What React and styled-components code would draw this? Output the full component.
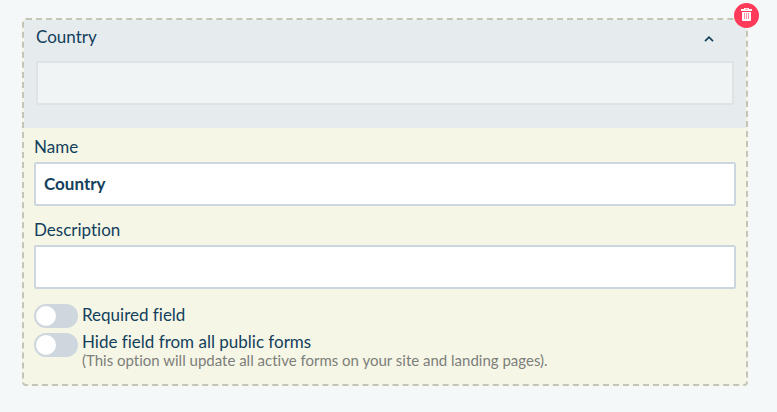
import React, { useState } from "react";
import styled, { createGlobalStyle } from "styled-components";

const GlobalStyle = createGlobalStyle`
  * {
    box-sizing: border-box;
  }
  body {
    margin: 0;
    background: #f5f8f9;
    color: #12405c;
    font-family: Lato, "Liberation Sans", sans-serif;
    font-size: 17px;
    font-variant-ligatures: none;
    line-height: 24px;
  }
`;

// layout
const Page = styled.main`
  padding: 18px 29px 26px 22px;
`;
const Card = styled.section`
  position: relative;
  background: #f6f6e6;
  border: 2px dashed #c4c5b8;
  border-radius: 4px;
`;
const Preview = styled.div`
  padding: 5px 12px 23px;
  background: #e6ebee;
`;
const PreviewHeader = styled.div`
  display: flex;
  justify-content: space-between;
  align-items: center;
  padding-right: 20px;
  margin-bottom: 12px;
`;
const Settings = styled.div`
  padding: 0 10px 15px;
`;

// fields
const Field = styled.div`
  margin-bottom: 5px;
`;
const Label = styled.label`
  display: block;
  padding: 7px 0 3px;
`;
const TextInput = styled.input`
  display: block;
  width: 100%;
  height: 44px;
  padding: 0 8px 2px;
  color: inherit;
  font: inherit;
  font-weight: 700;
  background: #fff;
  border: 2px solid #ccd6de;
  border-radius: 2px;
  &:disabled {
    background: #f0f4f5;
    border-color: #dee3e6;
  }
`;

// buttons
const CollapseButton = styled.button`
  display: flex;
  padding: 4px 0 0;
  color: inherit;
  background: none;
  border: 0;
  cursor: pointer;
`;
const DeleteButton = styled.button`
  position: absolute;
  top: -17px;
  right: -13px;
  display: flex;
  justify-content: center;
  align-items: center;
  width: 25px;
  height: 25px;
  padding: 0 0 2px;
  color: #fff;
  background: #ff3b59;
  border: 0;
  border-radius: 50%;
  cursor: pointer;
`;

// switches
const SwitchList = styled.div`
  display: flex;
  flex-direction: column;
  gap: 5px;
  padding-top: 10px;
`;
const SwitchRow = styled.label`
  display: flex;
  align-items: flex-start;
  gap: 4px;
  cursor: pointer;
`;
const Switch = styled.input`
  appearance: none;
  flex: none;
  width: 44px;
  height: 24px;
  margin: 0;
  padding: 2px;
  background: #ced6de;
  border-radius: 12px;
  cursor: pointer;
  &::before {
    content: "";
    display: block;
    width: 20px;
    height: 20px;
    background: #fff;
    border-radius: 50%;
  }
  &:checked {
    background: #12405c;
  }
  &:checked::before {
    margin-left: auto;
  }
`;
const SwitchText = styled.span`
  display: flex;
  flex-direction: column;
  line-height: ${(props) => (props.$withNote ? "18px" : "22px")};
`;
const Note = styled.small`
  color: #7c7e7a;
  font-size: 15px;
`;

const TrashIcon = () => (
  <svg width="13" height="13" viewBox="0 0 13 13" aria-hidden="true">
    <path fill="currentColor" d="M4 0h5v1h3v2H1V1h3z" />
    <path fill="currentColor" d="M2 4h9v8q0 1-1 1H3q-1 0-1-1z" />
    <path
      d="M4.5 5v6M6.5 5v6M8.5 5v6"
      stroke="#ff3b59"
      strokeOpacity="0.55"
      fill="none"
    />
    <path d="M5 1.2h3" stroke="#ff3b59" strokeOpacity="0.5" />
  </svg>
);

const ChevronIcon = () => (
  <svg width="10" height="6" viewBox="0 0 10 6" aria-hidden="true">
    <path
      d="M1 5.2L5 1.2L9 5.2"
      fill="none"
      stroke="currentColor"
      strokeWidth="1.7"
    />
  </svg>
);

export default function App() {
  const [name, setName] = useState("Country");
  const [description, setDescription] = useState("");

  return (
    <>
      <GlobalStyle />
      <Page>
        <Card>
          {/* preview */}
          <Preview>
            <PreviewHeader>
              <label htmlFor="preview">{name}</label>
              <CollapseButton type="button" aria-label="Collapse">
                <ChevronIcon />
              </CollapseButton>
            </PreviewHeader>
            <TextInput id="preview" disabled />
          </Preview>
          {/* settings */}
          <Settings>
            <Field>
              <Label htmlFor="name">Name</Label>
              <TextInput
                id="name"
                value={name}
                onChange={(e) => setName(e.target.value)}
              />
            </Field>
            <Field>
              <Label htmlFor="description">Description</Label>
              <TextInput
                id="description"
                value={description}
                onChange={(e) => setDescription(e.target.value)}
              />
            </Field>
            <SwitchList>
              <SwitchRow>
                <Switch type="checkbox" role="switch" />
                <SwitchText>Required field</SwitchText>
              </SwitchRow>
              <SwitchRow>
                <Switch type="checkbox" role="switch" />
                <SwitchText $withNote>
                  Hide field from all public forms
                  <Note>
                    (This option will update all active forms on your site and
                    landing pages).
                  </Note>
                </SwitchText>
              </SwitchRow>
            </SwitchList>
          </Settings>
          <DeleteButton type="button" aria-label="Delete field">
            <TrashIcon />
          </DeleteButton>
        </Card>
      </Page>
    </>
  );
}
